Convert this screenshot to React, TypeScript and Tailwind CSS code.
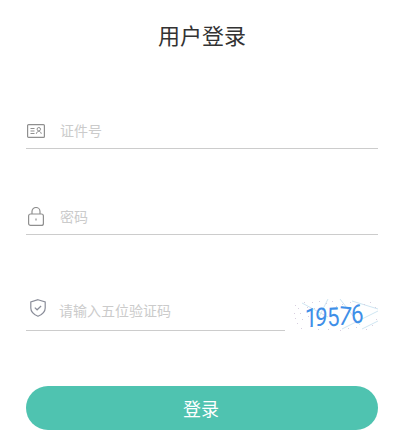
const font = { fontFamily: '"Noto Sans CJK SC", sans-serif' };

function IdIcon() {
  return (
    <svg className="ml-[1px]" width="18" height="14" viewBox="0 0 18 14" fill="none" stroke="#8f8f8f" strokeWidth="1.2">
      <rect x="0.6" y="0.6" width="16.800" height="12.800" rx="1" />
      <path d="M3.500 4.500h4M3.500 7h4M3.500 9.500h4" strokeWidth="1" />
      <circle cx="11.800" cy="5.200" r="1.700" strokeWidth="1" />
      <path d="M9.300 9.800c.3-1.600 1.300-2.400 2.500-2.400s2.200.8 2.500 2.400" strokeWidth="1" />
    </svg>
  );
}

function LockIcon() {
  return (
    <svg className="ml-[2px]" width="16" height="19" viewBox="0 0 16 19" fill="none" stroke="#8f8f8f" strokeWidth="1.2">
      <rect x="0.6" y="7" width="14.800" height="11.400" rx="2" />
      <path d="M4 7V4.500a4 4 0 0 1 8 0V7" />
      <path d="M8 11.500v2" />
    </svg>
  );
}

function ShieldIcon() {
  return (
    <svg className="mb-[5px] ml-[4px]" width="16" height="18" viewBox="0 0 16 18" fill="none" stroke="#8a8d99" strokeWidth="1.200">
      <path d="M8 .7l7.200 2.300v6c0 3.800-3 6.500-7.200 8.300C3.800 15.500.8 12.800.8 9V3z" />
      <path d="M4.800 8.600l2.300 2.200 4-3.800" />
    </svg>
  );
}

const noise = [
  [3, 6], [8, 14], [12, 3], [5, 24], [18, 27], [22, 9], [34, 4], [44, 7], [58, 3], [72, 5], [80, 26], [64, 28],
  [2, 14], [6, 9], [10, 20], [15, 8], [16, 17], [20, 3], [27, 2], [3, 19], [9, 29], [26, 30], [40, 2], [50, 5],
  [67, 6], [78, 3], [83, 8], [36, 30], [48, 31], [56, 29], [74, 30], [84, 20],
];

function Captcha() {
  return (
    <div className="relative ml-[7px] h-[32px] w-[86px]">
      <svg className="absolute inset-0" width="86" height="32" viewBox="0 0 86 32" fill="none">
        <path d="M10 4l26 14M36 0l-10 20M48 0l20 26M50 30L86 12M60 2l26 8M70 30l16-8" stroke="#cfe6f2" strokeWidth="1" />
        <g fill="#d8cfe0">
          {noise.map(([x, y]) => (
            <rect key={`${x}-${y}`} x={x} y={y} width="1" height="1" />
          ))}
        </g>
      </svg>
      <div
        className="absolute bottom-[-2px] left-[12px] flex h-[30px] items-end text-[26px] leading-[30px] text-[#3f8fe8]"
        style={{ fontFamily: 'Roboto, sans-serif' }}
      >
        <span className="w-[10px] scale-x-85">1</span>
        <span className="w-[12px] -translate-y-[1px] scale-x-85 rotate-6">9</span>
        <span className="w-[12px] -translate-y-[1px] scale-x-85 -rotate-3">5</span>
        <span className="w-[12px] -translate-y-[2px] scale-x-85 rotate-6">7</span>
        <span className="w-[13px] -translate-y-[4px] scale-x-85 -rotate-3">6</span>
      </div>
    </div>
  );
}

function Field({ icon, placeholder, className, iconWidth }: { icon: React.ReactNode; placeholder: string; className: string; iconWidth: string }) {
  return (
    <div className={`flex h-[34px] flex-1 items-end border-b border-[#cccccc] ${className}`}>
      <div className="flex h-[19px] items-center">
        <div className={`flex items-center ${iconWidth}`}>{icon}</div>
        <span className="text-[14px] leading-[19px] text-[#cbcbcb]">{placeholder}</span>
      </div>
    </div>
  );
}

export default function App() {
  return (
    <div className="h-[446px] w-[406px] bg-white pt-[19px] pr-[28px] pl-[26px]" style={font}>
      <h1 className="text-center text-[22px] leading-[30px] font-normal text-[#333333]">用户登录</h1>
      <div className="mt-[66px]">
        <Field icon={<IdIcon />} placeholder="证件号" className="pb-[8px]" iconWidth="w-[34px]" />
      </div>
      <div className="mt-[52px]">
        <Field icon={<LockIcon />} placeholder="密码" className="pb-[8px]" iconWidth="w-[34px]" />
      </div>
      <div className="mt-[62px] flex items-end">
        <Field icon={<ShieldIcon />} placeholder="请输入五位验证码" className="pb-[10px]" iconWidth="w-[33px]" />
        <Captcha />
      </div>
      <button className="mt-[55px] h-[44px] w-full rounded-full bg-[#4fc3b0] pr-[2px] text-[18px] text-white">登录</button>
    </div>
  );
}
